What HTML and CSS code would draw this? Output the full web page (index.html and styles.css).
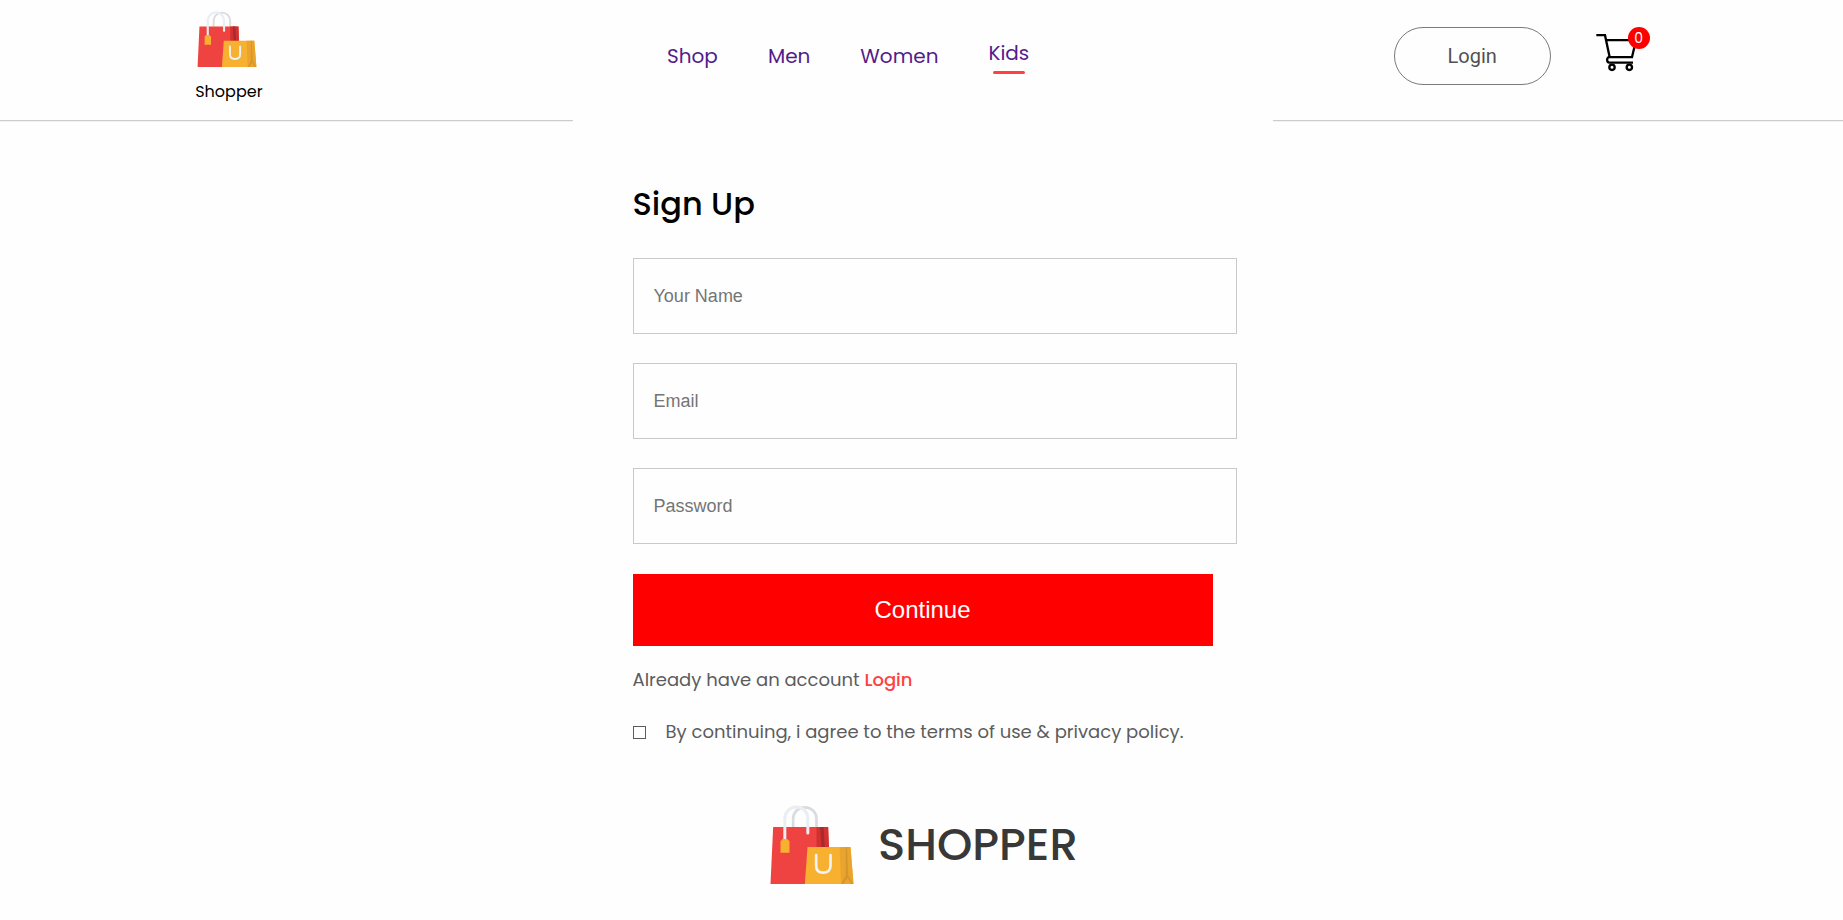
FILE: index.html
```html
<!DOCTYPE html>
<html lang="en">
<head>
<meta charset="utf-8">
<title>Shopper</title>
<link rel="stylesheet" href="styles.css">
</head>
<body>
<svg class="sprite" aria-hidden="true">
  <symbol id="bags" viewBox="63 75 249 237">
    <path d="M131 142v-26c0-18 14-34 35-34s35 16 35 34v26" fill="none" stroke="#d9dbdd" stroke-width="8"/>
    <path d="M71 141H236L240 312H63Z" fill="#ee4341"/>
    <path d="M201 141h35l3 70h-38z" fill="#d33131"/>
    <path d="M212 141h10l4 60h-10z" fill="#a82a2a"/>
    <path d="M106 182v-66c0-18 14-35 35-35s34 17 34 35v43" fill="none" stroke="#e9eef2" stroke-width="9" stroke-linecap="round"/>
    <path d="M93 184l6-7h14l7 7v34H93z" fill="#f8b030"/>
    <path d="M174 201H303L312 312H166Z" fill="#f8b030"/>
    <path d="M270 201h33l9 111h-37z" fill="#e9a42e"/>
    <path d="M289 201h3l4 86 15 25h-5l-12-19-13 19h-6l14-25z" fill="#d6952b"/>
    <path d="M200 225v33c0 13 8 20 21 20s22-7 22-20v-33" fill="none" stroke="#f0f2f3" stroke-width="8" stroke-linecap="round"/>
  </symbol>
</svg>
<header class="navbar">
  <div class="brand">
    <svg class="brand-icon" aria-hidden="true"><use href="#bags"/></svg>
    <p>Shopper</p>
  </div>
  <nav>
    <ul class="menu">
      <li><a href="#shop">Shop</a></li>
      <li><a href="#men">Men</a></li>
      <li><a href="#women">Women</a></li>
      <li><a href="#kids">Kids</a><hr></li>
    </ul>
  </nav>
  <div class="actions">
    <button class="login" type="button">Login</button>
    <a class="cart" href="#cart" aria-label="Cart">
      <svg viewBox="648 67 120 117" fill="none" stroke="#000" stroke-width="7" aria-hidden="true">
        <path d="M649 73.500h26l14 66h67l12-51h-89M689 139c-11 0-9 17-1 17h71"/>
        <circle cx="696" cy="170" r="8"/><circle cx="748" cy="170" r="8"/>
      </svg>
      <span class="count">0</span>
    </a>
  </div>
</header>
<div class="page">
  <main class="card">
    <form class="signup">
      <h1>Sign Up</h1>
      <div class="fields">
        <input type="text" placeholder="Your Name" aria-label="Your Name">
        <input type="email" placeholder="Email" aria-label="Email">
        <input type="password" placeholder="Password" aria-label="Password">
      </div>
      <button class="continue" type="button">Continue</button>
      <p class="have">Already have an account <a href="#login">Login</a></p>
      <div class="agree">
        <input type="checkbox" id="agree">
        <label for="agree">By continuing, i agree to the terms of use &amp; privacy policy.</label>
      </div>
    </form>
  </main>
  <footer class="footer">
    <svg class="footer-icon" aria-hidden="true"><use href="#bags"/></svg>
    <p>SHOPPER</p>
  </footer>
</div>
</body>
</html>
```
FILE: styles.css
```css
* { box-sizing: border-box; }
body {
  margin: 0;
  background: #fefefe;
  font-family: Poppins, Inter, "Open Sans", sans-serif;
}
p, h1, ul { margin: 0; padding: 0; }
a { text-decoration: none; }
.sprite { position: absolute; width: 0; height: 0; }

.navbar {
  display: flex;
  justify-content: space-around;
  align-items: flex-start;
  padding: 11px 11px 16px 13px;
  border-bottom: 1px solid #ccc;
  box-shadow: 0 1px 0 #f2f2f2;
}
.brand {
  display: flex;
  flex-direction: column;
  gap: 13px;
  font-size: 16px;
  line-height: 24px;
}
.brand-icon { width: 60px; height: 56px; margin-left: 2px; }
.menu {
  display: flex;
  align-items: center;
  gap: 50px;
  height: 90px;
  padding-left: 40px;
  list-style: none;
  font-size: 20px;
  line-height: 30px;
}
.menu li { display: flex; flex-direction: column; align-items: center; gap: 3px; }
.menu a { color: #551a8b; }
.menu hr {
  width: 32px;
  height: 3px;
  margin: 0;
  border: 0;
  border-radius: 10px;
  background: #ff4141;
}
.actions {
  display: flex;
  align-items: flex-start;
  gap: 45px;
  padding: 16px 14px 0 0;
}
.login {
  width: 157px;
  height: 58px;
  border: 1px solid #7a7a7a;
  border-radius: 75px;
  background: transparent;
  color: #515151;
  font-family: Roboto, sans-serif;
  font-size: 20px;
}
.cart { position: relative; display: block; margin-top: 6px; }
.cart svg { display: block; width: 40px; height: 39px; }
.count {
  position: absolute;
  top: -6px;
  right: -14px;
  width: 22px;
  height: 22px;
  border-radius: 11px;
  background: red;
  color: #fff;
  font-size: 14px;
  line-height: 22px;
  text-align: center;
}

.page { padding-left: 2px; }
.card {
  position: relative;
  max-width: 700px;
  margin: -20px auto 0;
  padding: 78px 36px 0 60px;
  background: #fefefe;
}
.signup h1 { font-size: 32px; font-weight: 500; line-height: 50px; }
.fields { display: grid; gap: 29px; margin-top: 29px; }
.fields input {
  width: 100%;
  height: 76px;
  padding: 0 20px;
  border: 1px solid #c9c9c9;
  border-radius: 0;
  background: transparent;
  color: #5c5c5c;
  font-family: "Liberation Sans", Arial, sans-serif;
  font-size: 18px;
}
.fields input::placeholder { color: #757575; opacity: 1; }
.continue {
  display: block;
  width: calc(100% - 24px);
  height: 72px;
  margin-top: 30px;
  border: 0;
  background: red;
  color: #fff;
  font-family: "Liberation Sans", Arial, sans-serif;
  font-size: 24px;
}
.have { margin-top: 20px; color: #5c5c5c; font-size: 18px; line-height: 28px; }
.have a { color: #ff4141; font-weight: 500; }
.agree {
  display: flex;
  align-items: center;
  gap: 20px;
  margin-top: 24px;
  color: #5c5c5c;
  font-size: 18px;
  line-height: 28px;
}
.agree input {
  appearance: none;
  width: 13px;
  height: 13px;
  margin: 0;
  border: 1px solid #5c5c5c;
  background: #fff;
}
.footer {
  display: flex;
  justify-content: center;
  align-items: center;
  gap: 24px;
  margin-top: 59px;
  padding-left: 3px;
}
.footer-icon { width: 84px; height: 79px; }
.footer p { color: #383838; font-size: 45px; font-weight: 500; line-height: 68px; }
```
